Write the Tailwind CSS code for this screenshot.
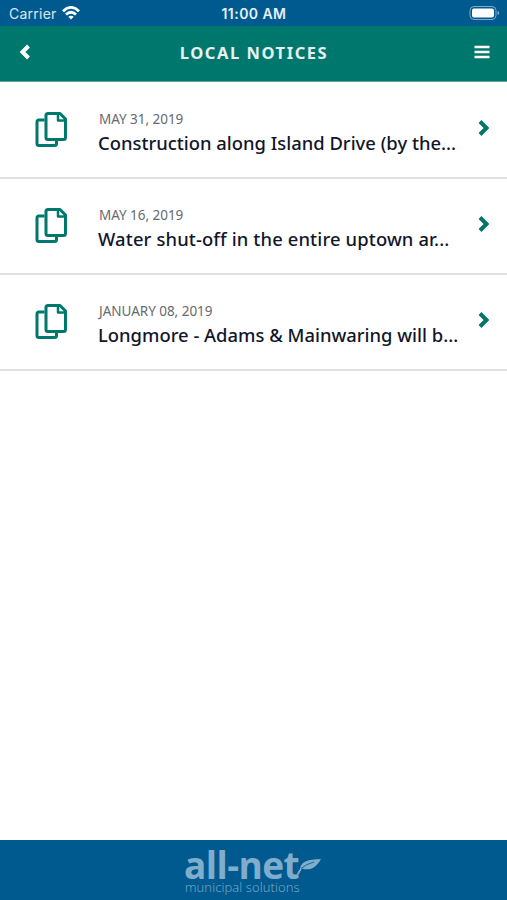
<!DOCTYPE html>
<html lang="en">
<head>
    <meta charset="UTF-8">
    <meta name="viewport" content="width=device-width, initial-scale=1.0">
    <title>Local Notices</title>
    <script src="https://cdn.jsdelivr.net/npm/@tailwindcss/browser@4"></script>
</head>
<body class="h-screen flex flex-col overflow-hidden bg-white font-['Noto_Sans','Open_Sans',sans-serif]">
    <!-- icons shared by the rows -->
    <svg class="hidden">
        <symbol id="copy" viewBox="0 0 34 38">
            <g fill="none" stroke="currentColor" stroke-width="3" stroke-linejoin="round">
                <path d="M10.5 9H5Q3 9 3 11V32.500Q3 34.500 5 34.500H20.500Q22.500 34.500 22.500 32.500V29"/>
                <path d="M14 2.500H26L31.500 8V26.500Q31.500 28.500 29.500 28.500H14Q12 28.500 12 26.500V4.500Q12 2.500 14 2.500Z"/>
                <path d="M24 3V9.500H31" stroke-width="2.500"/>
            </g>
        </symbol>
        <symbol id="chevron" viewBox="0 0 12 18">
            <path d="M2 2.500L8.500 9L2 15.500" fill="none" stroke="currentColor" stroke-width="4"/>
        </symbol>
    </svg>

    <div class="h-[26px] shrink-0 bg-[#005a8f] text-white flex items-center justify-between pl-[8px] pr-[7px] font-[Inter,sans-serif]">
        <div class="w-40 flex items-center gap-[5px]">
            <span class="text-[14px] leading-none tracking-[0.25px] text-white/85 pt-[2px] pl-px">Carrier</span>
            <svg class="w-[18px] h-[14px]" viewBox="0 0 18 14" fill="none" stroke="#fff" stroke-width="2.800">
                <path d="M1 5.200Q9 -2.400 17 5.200"/>
                <path d="M4 8.600Q9 3.900 14 8.600"/>
                <path d="M9 13.500L6.300 10.700Q9 8.600 11.700 10.700Z" fill="#fff" stroke="none"/>
            </svg>
        </div>
        <span class="text-[14px] leading-none font-semibold tracking-[0.450px] text-white/90 pt-[2px]">11:00 AM</span>
        <div class="w-40 flex justify-end">
            <svg class="w-[31px] h-[14px]" viewBox="0 0 31 14">
                <rect x="1" y=".5" width="26" height="13" rx="4" fill="none" stroke="#7fabc8"/>
                <rect x="3" y="2.500" width="22" height="9" rx="2" fill="#fff"/>
                <path d="M28.500 5V9Q30.300 8.500 30.300 7T28.500 5Z" fill="#7fabc8"/>
            </svg>
        </div>
    </div>

    <header class="h-14 shrink-0 bg-[#00776c] border-b border-[#5aa69e] text-white flex items-center justify-between pl-[18px] pr-[17px]">
        <svg class="w-3 h-[18px] -mt-[3px]" viewBox="0 0 12 18"><path d="M10.500 3L4.500 9L10.500 15" fill="none" stroke="#fff" stroke-width="4"/></svg>
        <h1 class="text-[16.500px] font-bold tracking-[1.550px] pl-[4px] -mt-px text-white/90">LOCAL NOTICES</h1>
        <svg class="w-4 h-[14px] -mt-[3px]" viewBox="0 0 16 14"><path d="M.5 2H15.500M.5 7H15.500M.5 12H15.500" stroke="#fff" stroke-width="2.600"/></svg>
    </header>

    <main class="flex-1 pt-px">
        <a class="h-24 flex items-start border-b-2 border-[#e1e1e1] pl-[34px] pr-[17px]">
            <svg class="w-[34px] h-[38px] mt-[28px] text-[#00776c] shrink-0"><use href="#copy"/></svg>
            <div class="ml-[30px] mt-[26px] w-[366px] whitespace-nowrap">
                <p class="text-[13.500px] leading-[20px] tracking-[-0.030px] text-[#666a70] pl-px">MAY 31, 2019</p>
                <h2 class="text-[18.400px] leading-[27px] font-medium text-[#111629]">Construction along Island Drive (by the...</h2>
            </div>
            <svg class="w-3 h-[18px] mt-[36px] ml-auto text-[#00776c] shrink-0"><use href="#chevron"/></svg>
        </a>
        <a class="h-24 flex items-start border-b-2 border-[#e1e1e1] pl-[34px] pr-[17px]">
            <svg class="w-[34px] h-[38px] mt-[28px] text-[#00776c] shrink-0"><use href="#copy"/></svg>
            <div class="ml-[30px] mt-[26px] w-[366px] whitespace-nowrap">
                <p class="text-[13.500px] leading-[20px] tracking-[-0.030px] text-[#666a70] pl-px">MAY 16, 2019</p>
                <h2 class="text-[18.400px] leading-[27px] font-medium tracking-[0.130px] text-[#111629]">Water shut-off in the entire uptown ar...</h2>
            </div>
            <svg class="w-3 h-[18px] mt-[36px] ml-auto text-[#00776c] shrink-0"><use href="#chevron"/></svg>
        </a>
        <a class="h-24 flex items-start border-b-2 border-[#e1e1e1] pl-[34px] pr-[17px]">
            <svg class="w-[34px] h-[38px] mt-[28px] text-[#00776c] shrink-0"><use href="#copy"/></svg>
            <div class="ml-[30px] mt-[26px] w-[366px] whitespace-nowrap">
                <p class="text-[13.500px] leading-[20px] tracking-[-0.030px] text-[#666a70] pl-px">JANUARY 08, 2019</p>
                <h2 class="text-[18.400px] leading-[27px] font-medium text-[#111629]">Longmore - Adams &amp; Mainwaring will b...</h2>
            </div>
            <svg class="w-3 h-[18px] mt-[36px] ml-auto text-[#00776c] shrink-0"><use href="#chevron"/></svg>
        </a>
    </main>

    <footer class="h-[60px] shrink-0 bg-[#005a8f] text-[#80adcb] pl-[184px] pt-[7px] font-['Open_Sans',sans-serif]">
        <div class="flex items-start">
            <span class="text-[37px] leading-[36px] font-bold tracking-[-0.600px]">all-net</span>
            <svg class="w-[25px] h-[20px] mt-[10px] -ml-[2px]" viewBox="0 0 25 20">
                <path d="M3 12C4 4 11 2.500 24 2C19 11 13 14 5 11.500L2 17H0Q1 14 3 12Z" fill="currentColor"/>
                <path d="M4 11.500Q9 7 17 5" fill="none" stroke="#005a8f" stroke-width=".8"/>
            </svg>
        </div>
        <p class="text-[13px] leading-[14px] -mt-[3px] pl-px tracking-[0.100px] font-light">municipal solutions</p>
    </footer>
</body>
</html>
